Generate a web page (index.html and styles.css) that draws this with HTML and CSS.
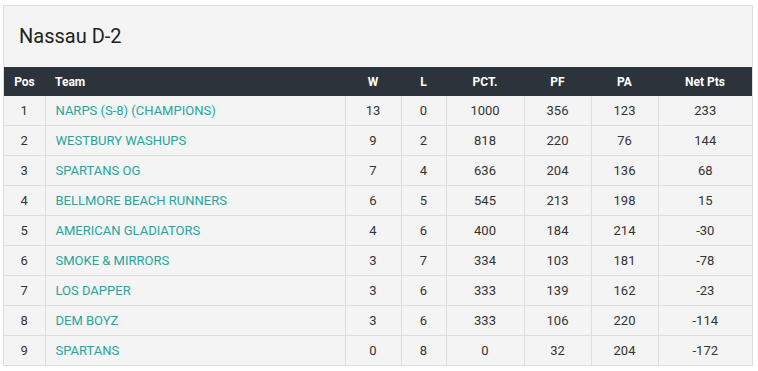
FILE: index.html
```html
<!DOCTYPE html>
<html lang="en">
<head>
    <meta charset="UTF-8">
    <title>Nassau D-2</title>
    <link rel="stylesheet" href="styles.css">
</head>
<body>
    <div class="standings">
        <h2 class="standings-title">Nassau D-2</h2>
        <table class="standings-table">
            <thead>
                <tr>
                    <th class="col-pos">Pos</th>
                    <th class="col-team">Team</th>
                    <th class="col-w">W</th>
                    <th class="col-l">L</th>
                    <th class="col-pct">PCT.</th>
                    <th class="col-pf">PF</th>
                    <th class="col-pa">PA</th>
                    <th class="col-net">Net Pts</th>
                </tr>
            </thead>
            <tbody>
                <tr><td>1</td><td class="team"><a href="#">NARPS (S-8) (CHAMPIONS)</a></td><td>13</td><td>0</td><td>1000</td><td>356</td><td>123</td><td>233</td></tr>
                <tr><td>2</td><td class="team"><a href="#">WESTBURY WASHUPS</a></td><td>9</td><td>2</td><td>818</td><td>220</td><td>76</td><td>144</td></tr>
                <tr><td>3</td><td class="team"><a href="#">SPARTANS OG</a></td><td>7</td><td>4</td><td>636</td><td>204</td><td>136</td><td>68</td></tr>
                <tr><td>4</td><td class="team"><a href="#">BELLMORE BEACH RUNNERS</a></td><td>6</td><td>5</td><td>545</td><td>213</td><td>198</td><td>15</td></tr>
                <tr><td>5</td><td class="team"><a href="#">AMERICAN GLADIATORS</a></td><td>4</td><td>6</td><td>400</td><td>184</td><td>214</td><td>-30</td></tr>
                <tr><td>6</td><td class="team"><a href="#">SMOKE &amp; MIRRORS</a></td><td>3</td><td>7</td><td>334</td><td>103</td><td>181</td><td>-78</td></tr>
                <tr><td>7</td><td class="team"><a href="#">LOS DAPPER</a></td><td>3</td><td>6</td><td>333</td><td>139</td><td>162</td><td>-23</td></tr>
                <tr><td>8</td><td class="team"><a href="#">DEM BOYZ</a></td><td>3</td><td>6</td><td>333</td><td>106</td><td>220</td><td>-114</td></tr>
                <tr><td>9</td><td class="team"><a href="#">SPARTANS</a></td><td>0</td><td>8</td><td>0</td><td>32</td><td>204</td><td>-172</td></tr>
            </tbody>
        </table>
    </div>
</body>
</html>
```

FILE: styles.css
```css
body {
    margin: 0;
    padding: 5px 5px 0 3px;
    font-family: Roboto, "Liberation Sans", sans-serif;
    background-color: #fff;
}

.standings {
    width: 748px;
    border: 1px solid #ddd;
    background-color: #f4f4f4;
}

.standings-title {
    margin: 0;
    padding: 15px 15px 16px;
    height: 30px;
    line-height: 30px;
    font-size: 20px;
    font-weight: 400;
    color: #222;
}

.standings-table {
    width: 100%;
    border-collapse: collapse;
    table-layout: fixed;
    font-size: 13px;
}

.standings-table th {
    background-color: #2b333b;
    color: #fff;
    font-weight: 700;
    font-size: 12px;
    height: 29px;
    padding: 0;
    text-align: center;
}

.standings-table th.col-team {
    text-align: left;
    padding-left: 10px;
}

/* ширины колонок */
.col-pos { width: 41px; }
.col-team { width: 290px; }
.col-w { width: 56px; }
.col-l { width: 45px; }
.col-pct { width: 78px; }
.col-pf { width: 67px; }
.col-pa { width: 67px; }

.standings-table td {
    height: 29px;
    padding: 0;
    text-align: center;
    color: #333;
    border-left: 1px solid #ddd;
    border-bottom: 1px solid #ddd;
}

.standings-table td:first-child {
    border-left: none;
}

.standings-table tr:last-child td {
    border-bottom: none;
}

.standings-table td.team {
    text-align: left;
    padding-left: 10px;
}

.team a {
    color: #19a8a2;
    text-decoration: none;
}
```
